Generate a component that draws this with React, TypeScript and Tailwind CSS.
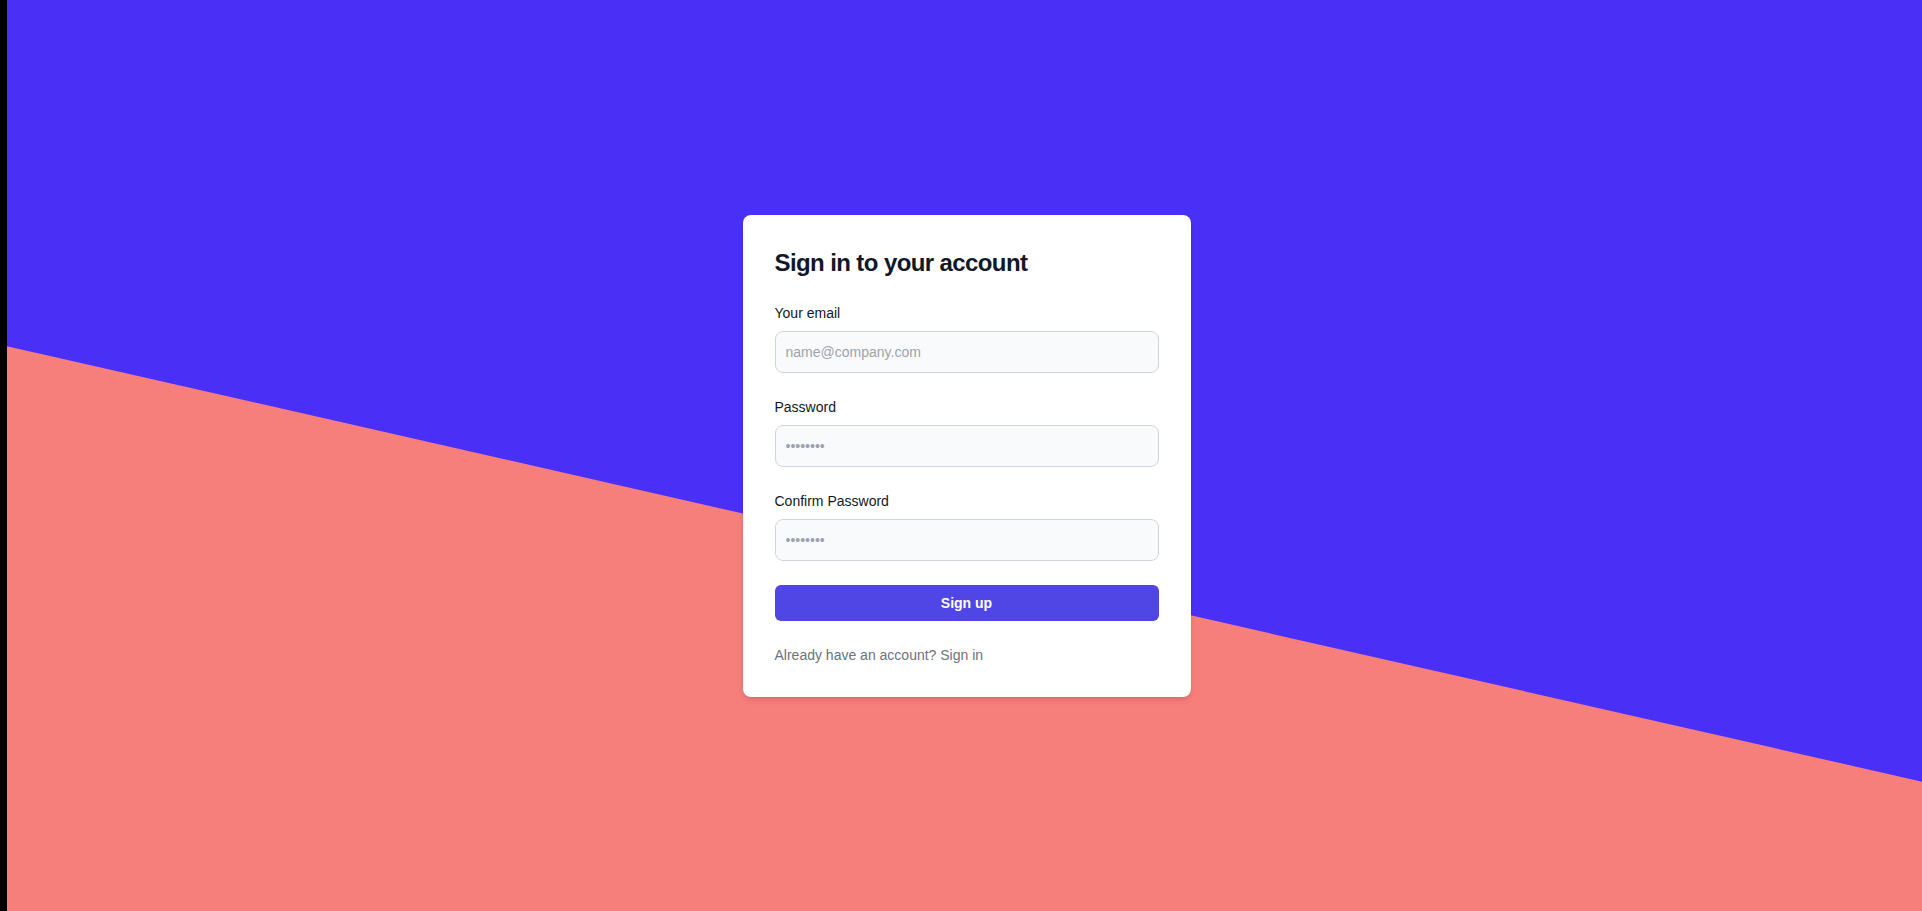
const fields = [
  { id: 'email', label: 'Your email', type: 'email', placeholder: 'name@company.com' },
  { id: 'password', label: 'Password', type: 'password', placeholder: '••••••••' },
  { id: 'confirm', label: 'Confirm Password', type: 'password', placeholder: '••••••••' },
];

export default function App() {
  return (
    <div className="flex h-[911px] w-full bg-black font-['Liberation_Sans',Arial,sans-serif]">
      <div className="w-[7px] shrink-0 bg-black" />
      <div className="relative flex flex-1 items-center justify-center bg-[#f67e7b] pl-[4px]">
        {/* diagonal backdrop */}
        <div className="absolute inset-0 bg-[#4a2ff6] [clip-path:polygon(0_0,100%_0,100%_85.8%,0_38%)]" />

        <div className="relative z-10 w-[448px] rounded-lg bg-white p-8 shadow-md">
          <h1 className="text-2xl font-bold tracking-tight text-[#111827]">Sign in to your account</h1>

          <form className="mt-6 space-y-6" onSubmit={(e) => e.preventDefault()}>
            {fields.map((f) => (
              <div key={f.id}>
                <label htmlFor={f.id} className="mb-2 block text-sm text-[#111827]">
                  {f.label}
                </label>
                <input
                  id={f.id}
                  type={f.type}
                  placeholder={f.placeholder}
                  className="block w-full rounded-lg border border-[#d1d5db] bg-[#f9fafb] p-2.5 text-sm text-[#111827] placeholder:text-[#9ca3af] focus:outline-none"
                />
              </div>
            ))}

            <button
              type="submit"
              className="w-full rounded-md bg-[#4f46e5] px-5 py-2 text-center text-sm font-bold text-white"
            >
              Sign up
            </button>

            <p className="text-sm text-[#6b7280]">Already have an account? Sign in</p>
          </form>
        </div>
      </div>
    </div>
  );
}
